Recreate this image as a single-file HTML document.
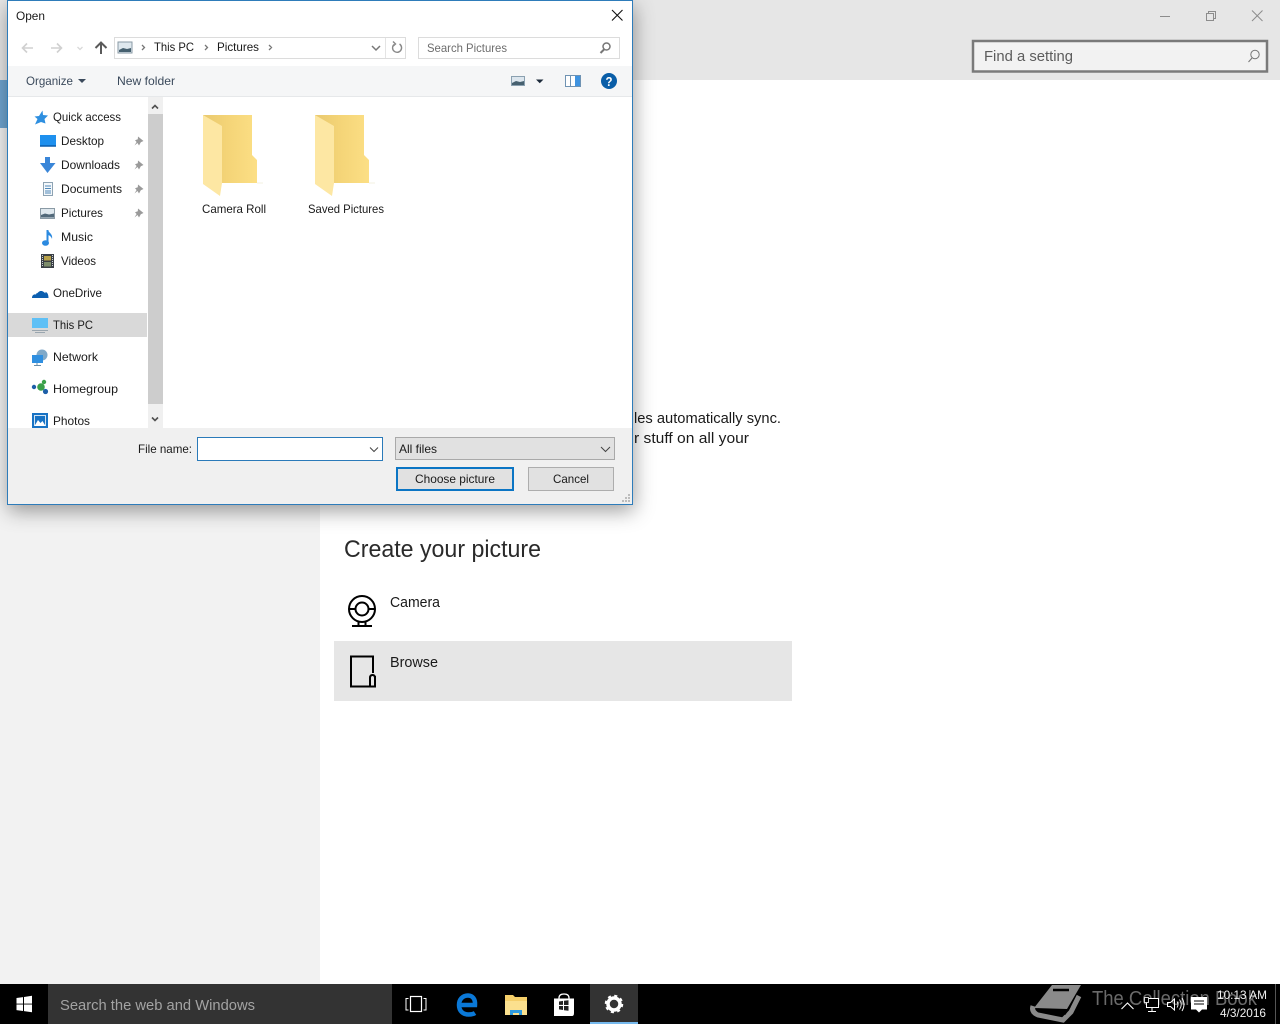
<!DOCTYPE html>
<html><head><meta charset="utf-8"><title>Open</title>
<style>
html,body{margin:0;padding:0;background:#fff;width:1280px;height:1024px;overflow:hidden}
svg{display:block}
text{font-family:"Liberation Sans",sans-serif;font-size:12px;fill:#1a1a1a;white-space:pre}
.s{font-size:15px}
</style></head><body>
<svg width="1280" height="1024" viewBox="0 0 1280 1024" xmlns="http://www.w3.org/2000/svg">
<defs>
<filter id="sh" x="-10%" y="-10%" width="120%" height="120%"><feDropShadow dx="1" dy="6" stdDeviation="10" flood-color="#000" flood-opacity=".38"/></filter>
<linearGradient id="fb" x1="0" x2="1" y1="0" y2="0"><stop offset="0" stop-color="#e9c96f"/><stop offset=".45" stop-color="#f4d477"/><stop offset="1" stop-color="#fcdf85"/></linearGradient>
<g id="folder">
<path d="M203 115H252V155L257 160V183H203Z" fill="url(#fb)"/>
<path d="M203 115L222 126V183L220 196L203 184Z" fill="#fde7a3"/>
<path d="M257 183h6" stroke="#f3f0e2" stroke-width="1"/>
</g>
<g id="pin"><path d="M-1 -4.500L4.500 0L1.800 1.200L0 4.500L-1.500 2L-4.500 4.500L-2.400 1L-4 -.8L-1.200 -1.700Z" fill="#9a9a9a"/></g>
</defs>
<rect width="1280" height="1024" fill="#fff"/>
<rect width="1280" height="80" fill="#e6e6e6"/>
<rect y="80" width="320" height="904" fill="#f2f2f2"/>
<rect y="80" width="8" height="48" fill="#6fa5d0"/>

<path d="M1160 16.500h10" stroke="#8c8c8c"/>
<path d="M1206.500 13.500h7v7h-7zM1208.500 13.500v-2h7v7h-2" fill="none" stroke="#8c8c8c"/>
<path d="M1252 10.500l10.500 10.500M1262.500 10.500l-10.500 10.500" stroke="#8c8c8c" fill="none"/>
<rect x="973" y="41" width="294" height="30.500" fill="#f2f2f2" stroke="#7a7a7a" stroke-width="2.500"/>
<text class="s" x="984" y="61" textLength="89" lengthAdjust="spacingAndGlyphs" style="fill:#5c5c5c">Find a setting</text>
<circle cx="1255" cy="54.500" r="4.200" fill="none" stroke="#777"/><path d="M1252 58l-3.500 4" stroke="#777"/>

<text class="s" x="634" y="423" textLength="147" lengthAdjust="spacingAndGlyphs">les automatically sync.</text>
<text class="s" x="634" y="443" textLength="115" lengthAdjust="spacingAndGlyphs">r stuff on all your</text>
<text x="344" y="557" textLength="197" lengthAdjust="spacingAndGlyphs" style="font-size:24px;fill:#2a2a2a">Create your picture</text>
<circle cx="362" cy="609" r="13" fill="none" stroke="#000" stroke-width="2"/>
<circle cx="362" cy="609" r="6.500" fill="none" stroke="#000" stroke-width="2"/>
<path d="M349 609h6.500M368.500 609h6.500M358.500 622v3M365.500 622v3M352 626h20" stroke="#000" stroke-width="2" fill="none"/>
<text class="s" x="390" y="607" textLength="50" lengthAdjust="spacingAndGlyphs">Camera</text>
<rect x="334" y="641" width="458" height="60" fill="#e6e6e6"/>
<path d="M373 673V656.500H351V686.500H375V676M370 686V678q0-3 2.500-3t2.500 3V686" fill="none" stroke="#000" stroke-width="2"/>
<text class="s" x="390" y="667" textLength="48" lengthAdjust="spacingAndGlyphs">Browse</text>

<!-- Dialog -->
<rect x="7.500" y=".5" width="625" height="504" fill="#fff" stroke="#2f7cba" filter="url(#sh)"/>
<rect x="8" y="66" width="624" height="30" fill="#f5f6f7"/>
<path d="M8 96.500h624" stroke="#e6e8ea"/>
<text x="16" y="20" textLength="29" lengthAdjust="spacingAndGlyphs">Open</text>
<path d="M612 10l10.500 10.500M622.500 10l-10.500 10.500" stroke="#111" stroke-width="1.100" fill="none"/>

<path d="M33 48H23M27 43.500L22.500 48L27 52.500" fill="none" stroke="#d0d0d0" stroke-width="1.600"/>
<path d="M51 48H61M57 43.500L61.500 48L57 52.500" fill="none" stroke="#d0d0d0" stroke-width="1.600"/>
<path d="M77.500 47l2.500 2.500 2.500-2.500" fill="none" stroke="#d8d8d8" stroke-width="1.300"/>
<path d="M101 54V42.500M95.500 48L101 42.500L106.500 48" fill="none" stroke="#5a5a5a" stroke-width="2"/>

<rect x="114.500" y="37.500" width="291" height="21" fill="#fff" stroke="#dcdcdc"/>
<path d="M385.500 38v20" stroke="#e4e4e4"/>
<rect x="118" y="42" width="14" height="11" fill="#dfe8ee" stroke="#8a9aa5"/><path d="M119 50l4-2 4 1 4-1v4h-12z" fill="#46606f"/>
<path d="M142 45l2.500 2.500-2.500 2.500M205 45l2.500 2.500-2.500 2.500M269 45l2.500 2.500-2.500 2.500" fill="none" stroke="#777" stroke-width="1.300"/>
<text x="154" y="51" textLength="40" lengthAdjust="spacingAndGlyphs">This PC</text>
<text x="217" y="51" textLength="42" lengthAdjust="spacingAndGlyphs">Pictures</text>
<path d="M372 46l4 4 4-4" fill="none" stroke="#777" stroke-width="1.500"/>
<path d="M399.500 44a4.500 4.500 0 1 1-5.500 .5M393 41.500l2.500 2.500-2.500 2.200" fill="none" stroke="#888" stroke-width="1.400"/>
<rect x="418.500" y="37.500" width="201" height="21" fill="#fff" stroke="#dcdcdc"/>
<text x="427" y="52" textLength="80" lengthAdjust="spacingAndGlyphs" style="fill:#6d6d6d">Search Pictures</text>
<circle cx="606.500" cy="46.500" r="3.500" fill="none" stroke="#777" stroke-width="1.500"/><path d="M604 49.500l-3.500 3.500" stroke="#777" stroke-width="2"/>

<text x="26" y="85" textLength="47" lengthAdjust="spacingAndGlyphs" style="fill:#3b4a5c">Organize</text>
<path d="M78 79h8l-4 4z" fill="#3b4a5c"/>
<text x="117" y="85" textLength="58" lengthAdjust="spacingAndGlyphs" style="fill:#3b4a5c">New folder</text>
<rect x="511.500" y="76.500" width="13" height="9" fill="#dce6ee" stroke="#8aa0b0"/><path d="M512 83l4-2 4 1 4-1v4h-12z" fill="#46606f"/>
<path d="M536 79.500h7.500l-3.750 3.800z" fill="#1c2a3a"/>
<rect x="565.500" y="75.500" width="15" height="11" fill="#fff" stroke="#6f93b3"/><rect x="575" y="76" width="5" height="10" fill="#3f93e0"/><path d="M570.500 76v10" stroke="#6f93b3"/>
<circle cx="609" cy="81" r="8" fill="#0a5ea8"/>
<text x="605.500" y="86" textLength="7" lengthAdjust="spacingAndGlyphs" style="font-weight:bold;font-size:13px;fill:#fff">?</text>

<!-- Nav -->
<rect x="8" y="313" width="139" height="24" fill="#d9d9d9"/>
<rect x="148" y="97" width="15" height="331" fill="#f0f0f0"/>
<rect x="148" y="114" width="15" height="290" fill="#cdcdcd"/>
<path d="M152 108.500l3-3 3 3M152 417.500l3 3 3-3" fill="none" stroke="#505050" stroke-width="1.600"/>

<path d="M42.500 110.500l.5 4.500 5 .5-3.500 3.500 1 4.500-4.500-1.500-6 2.500 2.500-5.500-3-2.500 4.500-.5z" fill="#2e8fe0"/>
<text x="53" y="121" textLength="68" lengthAdjust="spacingAndGlyphs">Quick access</text>

<rect x="40" y="135" width="16" height="11" fill="#1e90ee"/><path d="M40 146h16" stroke="#0a5cab" stroke-width="1.500"/>
<text x="61" y="145" textLength="43" lengthAdjust="spacingAndGlyphs">Desktop</text>
<use href="#pin" x="139" y="141"/>

<path d="M45 157h5v6h5.500L47.500 173L40 163h5z" fill="#3a86d8"/>
<text x="61" y="169" textLength="59" lengthAdjust="spacingAndGlyphs">Downloads</text>
<use href="#pin" x="139" y="165"/>

<rect x="43.500" y="182.500" width="9" height="13" fill="#f4f8fb" stroke="#8ea3b3"/><path d="M45 186h6M45 188.500h6M45 191h6M45 193h6" stroke="#4f88b8"/>
<text x="61" y="193" textLength="61" lengthAdjust="spacingAndGlyphs">Documents</text>
<use href="#pin" x="139" y="189"/>

<rect x="40.500" y="208.500" width="14" height="10" fill="#dfe8ee" stroke="#8a9aa5"/><path d="M41 215l4-1.500 4 1 5-1v4h-13z" fill="#52697a"/>
<text x="61" y="217" textLength="42" lengthAdjust="spacingAndGlyphs">Pictures</text>
<use href="#pin" x="139" y="213"/>

<path d="M47.500 230v13" stroke="#2b8ae0" stroke-width="2"/><path d="M48 230c1 3 5 4 4 9-.5-2-2-3.500-4-4z" fill="#2b8ae0"/><ellipse cx="45.500" cy="243" rx="3.500" ry="2.800" fill="#2b8ae0"/>
<text x="61" y="241" textLength="32" lengthAdjust="spacingAndGlyphs">Music</text>

<rect x="41" y="254" width="13" height="14" fill="#3a3f45"/><rect x="44" y="256" width="7" height="4.500" fill="#b8a24a"/><rect x="44" y="262" width="7" height="4.500" fill="#7c8c6a"/><path d="M42.500 255v12M52.500 255v12" stroke="#cfd3d6" stroke-dasharray="1 1"/>
<text x="61" y="265" textLength="35" lengthAdjust="spacingAndGlyphs">Videos</text>

<path d="M32 298c0-3 2-4 4-3.500 1-3 5-5 8-2.500 3-.5 4.500 2 4.500 6H33z" fill="#0c5fb0"/><path d="M37 293q4-5 8.500 0" fill="none" stroke="#fff" stroke-width=".8"/>
<text x="53" y="297" textLength="49" lengthAdjust="spacingAndGlyphs">OneDrive</text>

<rect x="32" y="318" width="16" height="10" fill="#5fc0f5"/><path d="M32 330.500h16M35 332.500h10" stroke="#9aa6af"/>
<text x="53" y="329" textLength="40" lengthAdjust="spacingAndGlyphs">This PC</text>

<circle cx="42" cy="355" r="5.500" fill="#7fa9c9"/><rect x="32" y="355" width="11" height="8" fill="#2f8fe0"/><path d="M37 363v2M34 365.500h7" stroke="#6a8da8"/>
<text x="53" y="361" textLength="45" lengthAdjust="spacingAndGlyphs">Network</text>

<circle cx="34" cy="387" r="2.200" fill="#1d5fa8"/><circle cx="41" cy="387" r="3.800" fill="#3aa04a"/><circle cx="44" cy="382" r="2.200" fill="#3aa04a"/><circle cx="45.500" cy="391.500" r="2.600" fill="#1d5fa8"/>
<text x="53" y="393" textLength="65" lengthAdjust="spacingAndGlyphs">Homegroup</text>

<rect x="32" y="413" width="16" height="15" fill="#1873c4"/><path d="M34.500 426l3.500-6 2.500 3 2-2 3 5z" fill="#fff"/><rect x="34.500" y="415.500" width="11" height="10" fill="none" stroke="#fff" stroke-opacity=".8"/>
<text x="53" y="425" textLength="37" lengthAdjust="spacingAndGlyphs">Photos</text>

<!-- Files -->
<use href="#folder"/>
<use href="#folder" x="112"/>
<text x="202" y="213" textLength="64" lengthAdjust="spacingAndGlyphs">Camera Roll</text>
<text x="308" y="213" textLength="76" lengthAdjust="spacingAndGlyphs">Saved Pictures</text>

<!-- Bottom -->
<rect x="8" y="428" width="624" height="76" fill="#f0f0f0"/>
<text x="138" y="453" textLength="54" lengthAdjust="spacingAndGlyphs">File name:</text>
<rect x="197.500" y="437.500" width="185" height="23" fill="#fff" stroke="#2a7ab9"/>
<path d="M370 447.500l4 4 4-4" fill="none" stroke="#444"/>
<rect x="395.500" y="437.500" width="219" height="22" fill="#e1e1e1" stroke="#a9a9a9"/>
<text x="399" y="453" textLength="38" lengthAdjust="spacingAndGlyphs">All files</text>
<path d="M601 447l4.500 4.500 4.500-4.500" fill="none" stroke="#444"/>
<rect x="397" y="468" width="116" height="22" fill="#e1e1e1" stroke="#0b75c4" stroke-width="2"/>
<text x="415" y="483" textLength="80" lengthAdjust="spacingAndGlyphs">Choose picture</text>
<rect x="528.500" y="467.500" width="85" height="23" fill="#e1e1e1" stroke="#adadad"/>
<text x="553" y="483" textLength="36" lengthAdjust="spacingAndGlyphs">Cancel</text>
<path d="M628 494h2v2h-2zM625 497h2v2h-2zM628 497h2v2h-2zM622 500h2v2h-2zM625 500h2v2h-2zM628 500h2v2h-2z" fill="#bcbcbc"/>

<!-- Taskbar -->
<rect y="984" width="1280" height="40" fill="#000"/>
<path d="M16.500 998l6.500-.9v6.500h-6.500zM24 997l8-1.200v7.800h-8zM16.500 1004.500h6.500v6.500l-6.500-.9zM24 1004.500h8v7.700l-8-1.100z" fill="#fff"/>
<rect x="48" y="984" width="344" height="40" fill="#333"/>
<text class="s" x="60" y="1010" textLength="195" lengthAdjust="spacingAndGlyphs" style="fill:#a3a3a3">Search the web and Windows</text>
<path d="M408.500 998.500h-2.500v11.500h2.500M423.500 998.500h2.500v11.500h-2.500" fill="none" stroke="#fff"/><rect x="410.500" y="996.500" width="11" height="15" fill="none" stroke="#fff" stroke-width="1.200"/>
<path d="M460 1005h15c.5-6-2.500-9.500-7-9.500-5.500 0-9 4-9 9.500 0 6 4 9.500 9.500 9.500 2.500 0 5-.5 6.500-1.500" fill="none" stroke="#0a78d7" stroke-width="4.500"/>
<path d="M505 995h8l2 2h12v7h-22z" fill="#f5cf6a"/><rect x="505" y="1001" width="22" height="14" fill="#fbe08e"/><path d="M510 1015v-5h12v5h-3v-2h-6v2z" fill="#2f9be0"/>
<path d="M554 998.500h20v14.500q0 3-2 3h-18z" fill="#fff"/><path d="M559 999v-1q0-4 5-4t5 4v1" fill="none" stroke="#fff" stroke-width="1.300"/><path d="M559 1001.500l4-.6v4h-4zM564 1000.800l4.500-.6v4.800h-4.500zM559 1006h4v4l-4-.6zM564 1006h4.500v4.800l-4.500-.6z" fill="#222"/>
<rect x="590" y="984" width="48" height="40" fill="#333"/><rect x="590" y="1022" width="48" height="2" fill="#76b9ed"/>
<circle cx="614" cy="1004" r="6" fill="none" stroke="#fff" stroke-width="3.500"/>
<circle cx="614" cy="1004" r="8" fill="none" stroke="#fff" stroke-width="2.500" stroke-dasharray="3 3.280"/>

<!-- Watermark -->
<path d="M1034 1008L1052 985h29l-14 24z" fill="#8a8a8a"/>
<path d="M1079 996l-8 16-8 8-25-5q-7-3-5-9" fill="none" stroke="#8a8a8a" stroke-width="5"/>
<path d="M1038 1009l27 5 5-7" fill="none" stroke="#000" stroke-width="1.500"/>
<path d="M1053 990l16 0" stroke="#000" stroke-width="2.500"/>
<text x="1092" y="1005" textLength="165" lengthAdjust="spacingAndGlyphs" style="font-size:20px;fill:#6a6a6a">The Collection Book</text>

<path d="M1121.500 1009l6-6 6 6" fill="none" stroke="#fff" stroke-width="1.100"/>
<rect x="1146.500" y="998.500" width="12" height="9" fill="#000" stroke="#fff"/><path d="M1152 1008v3M1148 1011.500h8" stroke="#fff"/><rect x="1144.500" y="997.500" width="4" height="5" fill="#000" stroke="#fff" stroke-width=".8"/>
<path d="M1167.500 1002.500h3l4-3.500v11l-4-3.500h-3z" fill="none" stroke="#fff"/><path d="M1177 1001.500q2 3 0 6M1179.500 999.500q3.500 5 0 10M1182 998q4 6.500 0 13" fill="none" stroke="#fff" stroke-width=".9"/>
<path d="M1191 997h16v12.500h-5l-3 3-3-3h-5z" fill="#fff"/><path d="M1194 1001h10M1194 1004h10" stroke="#000"/>
<text x="1217" y="999" textLength="50" lengthAdjust="spacingAndGlyphs" style="fill:#f0f0f0">10:13 AM</text>
<text x="1220" y="1017" textLength="46" lengthAdjust="spacingAndGlyphs" style="fill:#f0f0f0">4/3/2016</text>
<path d="M1275.500 984v40" stroke="#555"/>
</svg>
</body></html>
